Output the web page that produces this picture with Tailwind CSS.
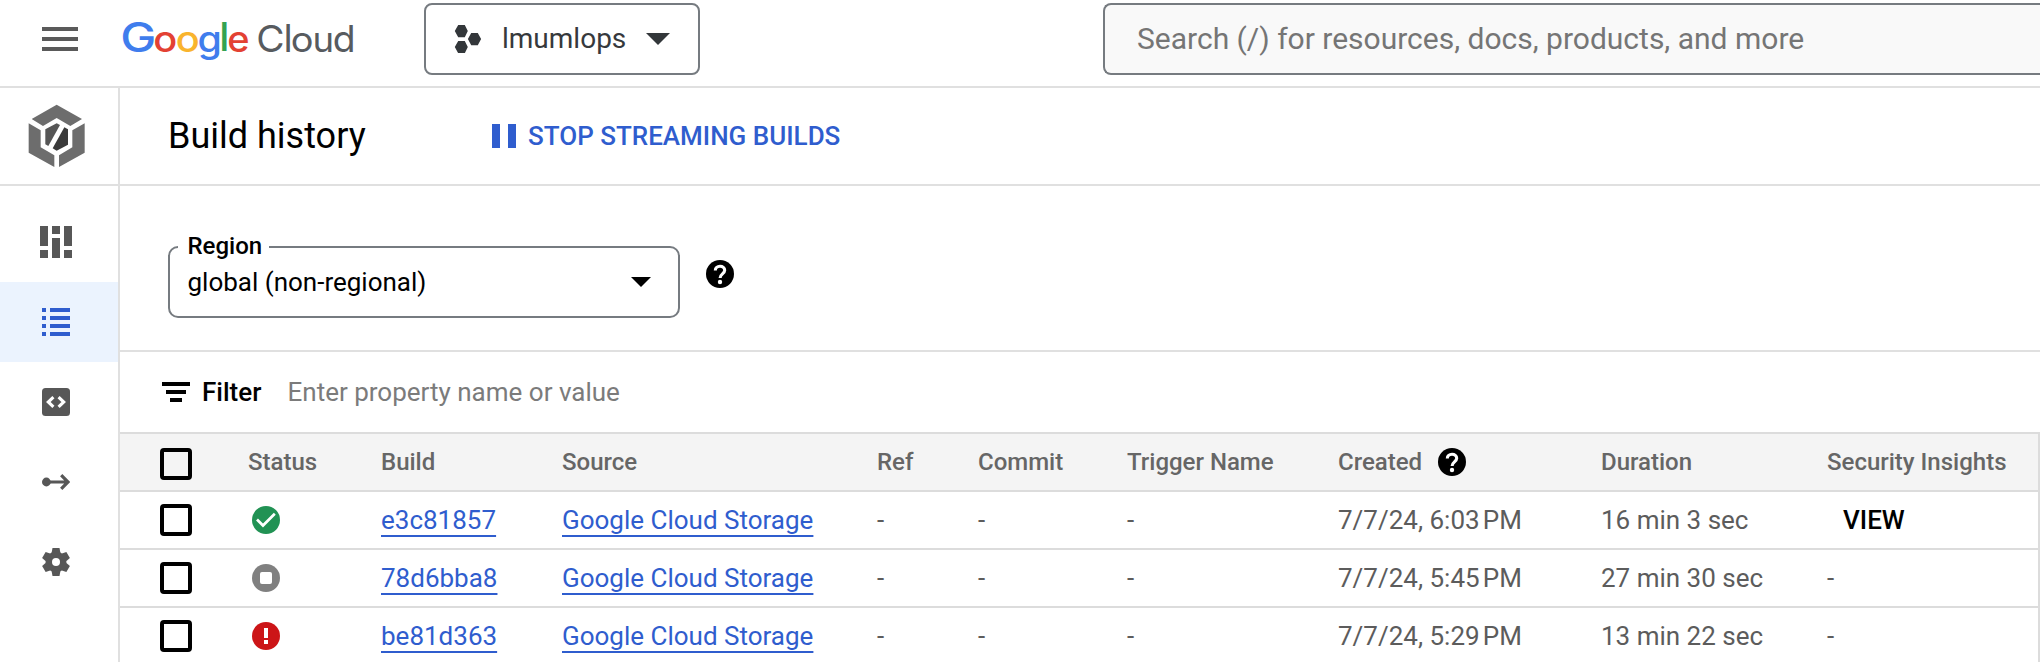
<!DOCTYPE html>
<html lang="en">
<head>
<meta charset="utf-8">
<title>Build history – Cloud Build</title>
<script src="https://cdn.jsdelivr.net/npm/@tailwindcss/browser@4"></script>
</head>
<body class="h-[662px] w-[2040px] overflow-hidden bg-white font-[Roboto,sans-serif] text-[26px] leading-none text-black">
<svg class="hidden">
  <symbol id="help" viewBox="0 0 28 28">
    <circle cx="14" cy="14" r="14" fill="#000"/>
    <path d="M9.3 10.4C9.3 7.8 11.3 6.2 14 6.2s4.7 1.6 4.7 4.1c0 3.5-4.6 3.7-4.6 7.6" fill="none" stroke="#fff" stroke-width="3.1"/>
    <circle cx="14" cy="22" r="2.2" fill="#fff"/>
  </symbol>
</svg>
<div class="flex h-full flex-col">
  <header class="flex h-[88px] shrink-0 items-start border-b-2 border-[#e0e0e0] pt-[3px]">
    <div class="flex h-[72px] w-[424px] shrink-0 items-center pl-[42px]">
      <div class="flex w-9 flex-col gap-1.5">
        <span class="h-1 bg-[#5a5a5a]"></span><span class="h-1 bg-[#5a5a5a]"></span><span class="h-1 bg-[#5a5a5a]"></span>
      </div>
      <svg class="ml-[42px] h-[72px] w-[240px]" viewBox="120 3 240 72" font-family="Inter, sans-serif">
        <g font-weight="500" font-size="35.5">
          <text transform="translate(120.2 51.5) scale(1.19 1)" font-size="40.5" fill="#3f7ded">G</text>
          <text transform="translate(153.3 51.8) scale(1.12 1)" fill="#e34133">o</text>
          <text transform="translate(175.8 51.8) scale(1.12 1)" fill="#f9b42d">o</text>
          <text transform="translate(197.6 51.8) scale(1.11 1.03)" fill="#3f7ded">g</text>
          <text transform="translate(219.3 51.3)" font-size="40" fill="#33a352">l</text>
          <text transform="translate(227.3 51.8) scale(1.07 1)" fill="#e34133">e</text>
        </g>
        <g font-size="34.5" fill="#575b5f">
          <text transform="translate(256.2 51.7) scale(1.04 1)" font-size="37.3">C</text>
          <text transform="translate(283.6 51.7)" font-size="38">l</text>
          <text transform="translate(290.7 51.7) scale(1.1 1)">o</text>
          <text transform="translate(312.4 51.7) scale(1.06 1)">u</text>
          <text transform="translate(332.7 51.7) scale(1.08 1.07)">d</text>
        </g>
      </svg>
    </div>
    <button class="flex h-[72px] w-[276px] shrink-0 items-center rounded-lg border-2 border-[#767b80] pl-7 text-[28px] text-[#36393c]">
      <svg class="h-7 w-7" viewBox="0 0 28 28" fill="#33373a">
        <path d="M4.2 0h6.6l3 6-3 6.2H4.2L.8 6zM4.2 16h6.6l3 6-3 6.2H4.2L.8 22zM17.2 8h6.6l3.3 6-3.3 6.2h-6.6L13.9 14z"/>
      </svg>
      <span class="-mt-px ml-5">lmumlops</span>
      <svg class="ml-5 h-3 w-6" viewBox="0 0 24 12"><path d="M0 0h24L12 12z" fill="#33373a"/></svg>
    </button>
    <div class="ml-[403px] flex h-[72px] grow items-center rounded-l-lg border-2 border-r-0 border-[#767b80] bg-[#f9f9f9] pl-[32px] text-[30px] text-[#757575]"><span class="-mt-px">Search (/) for resources, docs, products, and more</span></div>
  </header>

  <div class="flex min-h-0 grow">
    <nav class="flex w-[120px] shrink-0 flex-col border-r-2 border-[#e0e0e0]">
      <div class="h-[98px] shrink-0 border-b-2 border-[#e0e0e0] pt-4 pl-7">
        <svg class="h-[64px] w-[58px]" viewBox="84 312 174 192">
          <path d="M95 357l75-43 76 43-35 21-41-24-41 24zM86 370l36 21v51l41 24v35l-77-43zM254 370l-37 21v51l-40 24v35l77-43z" fill="#6d6d6d"/>
          <path d="M136 388l34-18 10 5-35 63-9-5z" fill="#565656"/>
          <path d="M193 382l11 6v46l-34 18-12-7z" fill="#3a3a3a"/>
        </svg>
      </div>
      <div class="mt-4 flex h-20 w-[112px] items-center justify-center">
        <svg class="h-8 w-8" viewBox="0 0 32 32" fill="#575757"><path d="M0 0h8v20H0zM0 24h8v8H0zM12 0h8v8h-8zM12 12h8v20h-8zM24 0h8v20h-8zM24 24h8v8h-8z"/></svg>
      </div>
      <div class="flex h-20 items-center bg-[#ebf3fe] pl-[42px]">
        <svg class="h-7 w-7" viewBox="0 0 28 28" fill="#2f5dce"><path d="M0 0h4v4H0zM8 0h20v4H8zM0 8h4v4H0zM8 8h20v4H8zM0 16h4v4H0zM8 16h20v4H8zM0 24h4v4H0zM8 24h20v4H8z"/></svg>
      </div>
      <div class="flex h-20 items-center pl-[42px]">
        <svg class="h-7 w-7" viewBox="0 0 28 28"><rect width="28" height="28" rx="3.5" fill="#575757"/><path d="M11.4 9.2L6.3 14l5.1 4.8M16.6 9.2l5.1 4.8-5.1 4.8" fill="none" stroke="#fff" stroke-width="3.1"/></svg>
      </div>
      <div class="flex h-20 items-center pl-[42px]">
        <svg class="h-7 w-7" viewBox="0 0 28 28"><circle cx="4.4" cy="14" r="4.4" fill="#575757"/><path d="M4 14h21.500M19.200 7.200L26 14l-6.800 6.800" fill="none" stroke="#575757" stroke-width="3.200"/></svg>
      </div>
      <div class="flex h-20 items-center pl-[42px]">
        <svg class="h-7 w-7" viewBox="-14 -14 28 28" fill="#575757">
          <circle r="10.400"/>
          <path id="t" d="M-3.500-14h7l1 5.500v17l-1 5.500h-7l-1-5.500v-17z"/>
          <use href="#t" transform="rotate(60)"/><use href="#t" transform="rotate(120)"/>
          <circle r="4" fill="#fff"/>
        </svg>
      </div>
    </nav>

    <main class="flex min-w-0 grow flex-col">
      <div class="flex h-[98px] shrink-0 items-center border-b-2 border-[#e0e0e0] pl-12">
        <h1 class="w-[324px] text-[36px]">Build history</h1>
        <svg class="h-6 w-6" viewBox="0 0 24 24" fill="#2f5dce"><path d="M0 0h8v24H0zM16 0h8v24h-8z"/></svg>
        <span class="ml-3 font-medium text-[#2f5dce]">STOP STREAMING BUILDS</span>
      </div>

      <div class="flex h-[166px] shrink-0 items-start border-b-2 border-[#e0e0e0] pt-[60px] pl-12">
        <div class="relative flex h-[72px] w-[512px] items-center justify-between rounded-[10px] border-2 border-[#767b80] pr-[27px] pl-[17.5px]">
          <span class="absolute -top-[16px] left-2 h-7 w-[91px] bg-white pl-[9.5px] text-2xl leading-7 font-medium">Region</span>
          <span>global (non-regional)</span>
          <svg class="h-2.5 w-5" viewBox="0 0 20 10"><path d="M0 0h20L10 10z"/></svg>
        </div>
        <svg class="mt-3.5 ml-[26px] h-7 w-7"><use href="#help"/></svg>
      </div>

      <div class="flex h-20 shrink-0 items-center pl-[42px]">
        <svg class="h-5 w-7" viewBox="0 0 28 20"><path d="M0 0h28v4H0zM4 8h20v4H4zM8 16h12v4H8z"/></svg>
        <span class="ml-[12px] w-[85.5px] font-medium">Filter</span>
        <span class="text-[#7b7b7b]">Enter property name or value</span>
      </div>

      <div class="shrink-0 border-t-2 border-r-2 border-[#dcdcdc] text-[#5c5c5c]">
        <div class="grid h-[58px] grid-cols-[128px_133px_181px_315px_101px_149px_211px_263px_226px_1fr] items-center border-b-2 border-[#dcdcdc] bg-[#f4f4f4] text-2xl font-medium whitespace-nowrap text-[#666]">
          <span class="mt-1 ml-10 h-8 w-8 rounded border-4 border-black"></span>
          <span>Status</span><span>Build</span><span>Source</span><span>Ref</span><span>Commit</span><span>Trigger Name</span>
          <span class="flex items-center justify-between pr-[135px]">Created<svg class="h-7 w-7"><use href="#help"/></svg></span>
          <span>Duration</span><span>Security Insights</span>
        </div>
        <div class="grid h-[58px] grid-cols-[128px_133px_181px_315px_101px_149px_211px_263px_226px_1fr] items-center border-b-2 border-[#dcdcdc] whitespace-nowrap">
          <span class="ml-10 h-8 w-8 rounded border-4 border-black"></span>
          <svg class="ml-1 h-7 w-7" viewBox="0 0 28 28"><circle cx="14" cy="14" r="14" fill="#219254"/><path d="M5 13.500l6 6L22.800 7.800" fill="none" stroke="#fff" stroke-width="2.700"/></svg>
          <span><a class="text-[#2f5dce] underline decoration-2 underline-offset-[6px] [text-decoration-skip-ink:none]">e3c81857</a></span>
          <span><a class="text-[#2f5dce] underline decoration-2 underline-offset-[6px] [text-decoration-skip-ink:none]">Google Cloud Storage</a></span>
          <span>-</span><span>-</span><span>-</span>
          <span>7/7/24, 6:03&#8239;PM</span><span>16 min 3 sec</span>
          <span class="pl-4 font-medium text-black">VIEW</span>
        </div>
        <div class="grid h-[58px] grid-cols-[128px_133px_181px_315px_101px_149px_211px_263px_226px_1fr] items-center border-b-2 border-[#dcdcdc] whitespace-nowrap">
          <span class="ml-10 h-8 w-8 rounded border-4 border-black"></span>
          <svg class="ml-1 h-7 w-7" viewBox="0 0 28 28"><circle cx="14" cy="14" r="14" fill="#808080"/><rect x="8" y="8" width="12" height="12" rx="2" fill="#fff"/></svg>
          <span><a class="text-[#2f5dce] underline decoration-2 underline-offset-[6px] [text-decoration-skip-ink:none]">78d6bba8</a></span>
          <span><a class="text-[#2f5dce] underline decoration-2 underline-offset-[6px] [text-decoration-skip-ink:none]">Google Cloud Storage</a></span>
          <span>-</span><span>-</span><span>-</span>
          <span>7/7/24, 5:45&#8239;PM</span><span>27 min 30 sec</span><span>-</span>
        </div>
        <div class="grid h-[58px] grid-cols-[128px_133px_181px_315px_101px_149px_211px_263px_226px_1fr] items-center border-b-2 border-[#dcdcdc] whitespace-nowrap">
          <span class="ml-10 h-8 w-8 rounded border-4 border-black"></span>
          <svg class="ml-1 h-7 w-7" viewBox="0 0 28 28"><circle cx="14" cy="14" r="14" fill="#cc1517"/><path d="M12 6h4v10h-4zM12 18h4v4h-4z" fill="#fff"/></svg>
          <span><a class="text-[#2f5dce] underline decoration-2 underline-offset-[6px] [text-decoration-skip-ink:none]">be81d363</a></span>
          <span><a class="text-[#2f5dce] underline decoration-2 underline-offset-[6px] [text-decoration-skip-ink:none]">Google Cloud Storage</a></span>
          <span>-</span><span>-</span><span>-</span>
          <span>7/7/24, 5:29&#8239;PM</span><span>13 min 22 sec</span><span>-</span>
        </div>
      </div>
    </main>
  </div>
</div>
</body>
</html>
